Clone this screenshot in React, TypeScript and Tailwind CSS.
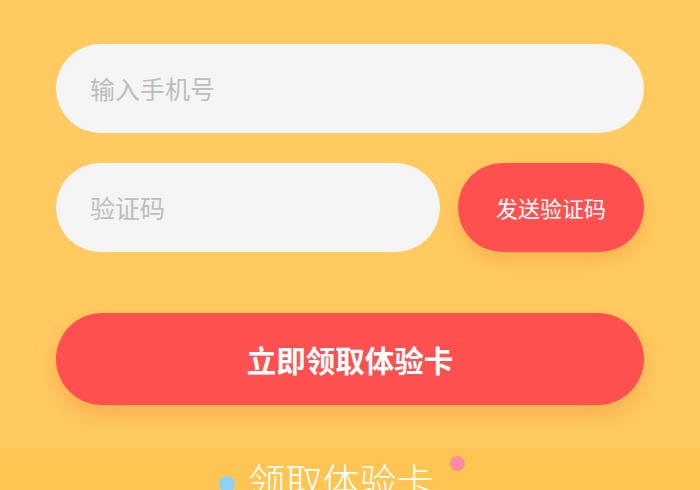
import React from 'react';

const font = { fontFamily: '"Noto Sans CJK SC", "Noto Sans", sans-serif' };

export default function App() {
  return (
    <div className="w-[700px] h-[490px] overflow-hidden bg-[#FFCB60] flex flex-col" style={font}>
      <div className="px-[56px] pt-[44px] flex flex-col">
        <div className="h-[89px] rounded-full bg-[#F5F5F5] flex items-center pl-[34px] text-[25px] text-[#BDBDBD]">
          输入手机号
        </div>
        <div className="mt-[30px] flex gap-[18px]">
          <div className="flex-1 h-[89px] rounded-full bg-[#F5F5F5] flex items-center pl-[34px] text-[25px] text-[#BDBDBD]">
            验证码
          </div>
          <button className="w-[186px] h-[89px] rounded-full bg-[#FF5050] text-white text-[22px] shadow-[0_8px_18px_rgba(235,120,50,0.3)]">
            发送验证码
          </button>
        </div>
        <button className="mt-[61px] h-[92px] rounded-full bg-[#FF5050] text-white text-[29.5px] font-bold shadow-[0_10px_22px_rgba(235,120,50,0.35)]">
          立即领取体验卡
        </button>
      </div>
      <div className="mt-[43px] flex-1 bg-[#FFC552] relative flex justify-center">
        <div className="pt-[8px] mr-[18px] text-[37px] leading-[48px] font-light text-white">领取体验卡</div>
        <span className="absolute left-[219px] top-[28px] w-[16px] h-[16px] rounded-full bg-[#8ECFFA]" />
        <span className="absolute left-[450px] top-[8px] w-[15px] h-[15px] rounded-full bg-[#FF8AA6]" />
      </div>
    </div>
  );
}
